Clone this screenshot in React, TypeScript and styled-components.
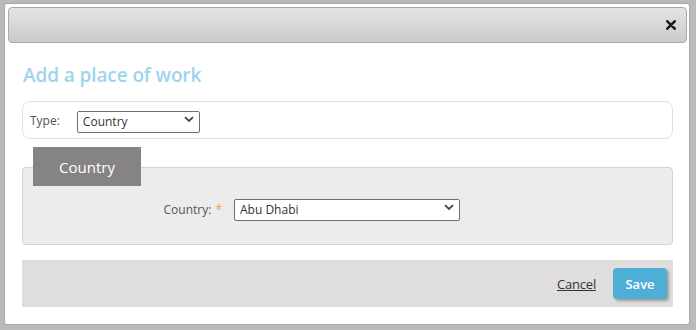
import React from "react";
import styled, { createGlobalStyle } from "styled-components";

const GlobalStyle = createGlobalStyle`
	html, body {
		margin: 0;
		padding: 0;
		background: #bababa;
		font-family: "Open Sans", "Liberation Sans", Arial, sans-serif;
	}
	#root {
		width: 696px;
		height: 330px;
		overflow: hidden;
	}
`;

const Backdrop = styled.div`
	width: 696px;
	height: 330px;
	padding: 3px 0 0 4px;
	box-sizing: border-box;
	background: #bababa;
`;

const Dialog = styled.div`
	width: 686px;
	height: 322px;
	box-sizing: border-box;
	background: #ffffff;
	border: 1px solid #a9a9a9;
	border-radius: 3px;
	padding: 3px 2px 0 3px;
	display: flex;
	flex-direction: column;
`;

const TitleBar = styled.div`
	height: 36px;
	box-sizing: border-box;
	border: 1px solid #a8a8a8;
	border-radius: 4px;
	background: linear-gradient(#e4e4e4, #cbcbcb);
	display: flex;
	align-items: center;
	justify-content: flex-end;
	padding-right: 9px;
`;

const CloseButton = styled.button`
	border: none;
	background: transparent;
	padding: 0;
	width: 12px;
	height: 12px;
	display: flex;
	align-items: center;
	justify-content: center;
	cursor: pointer;
`;

const Body = styled.div`
	padding: 0 14px 0 14px;
	display: flex;
	flex-direction: column;
`;

const Heading = styled.h2`
	margin: 20px 0 13px 1px;
	font-size: 19px;
	line-height: 25px;
	font-weight: 600;
	color: #9fd4ec;
	letter-spacing: -0.1px;
`;

const TypePanel = styled.div`
	height: 38px;
	box-sizing: border-box;
	border: 1px solid #d3e4e8;
	border-radius: 8px;
	display: flex;
	align-items: center;
	padding-left: 7px;
	gap: 17px;
`;

const Label = styled.label`
	font-size: 12px;
	color: #555555;
`;

const Required = styled.span`
	color: #f0a030;
	margin-left: 4px;
`;

const SelectWrap = styled.span<{ $width: number }>`
	position: relative;
	display: inline-block;
	width: ${(p) => p.$width}px;
	height: 22px;
`;

const Select = styled.select`
	appearance: none;
	width: 100%;
	height: 100%;
	box-sizing: border-box;
	border: 1px solid #6e6e6e;
	border-radius: 2px;
	background: #ffffff;
	font-family: inherit;
	font-size: 12px;
	color: #333333;
	padding: 0 20px 0 5px;
	outline: none;
`;

const Chevron = styled.svg`
	position: absolute;
	right: 6px;
	top: 7px;
	pointer-events: none;
`;

const Section = styled.div`
	margin-top: 8px;
	display: flex;
	flex-direction: column;
`;

const Tab = styled.div`
	align-self: flex-start;
	margin-left: 11px;
	width: 108px;
	height: 39px;
	background: #858385;
	color: #ffffff;
	font-size: 15px;
	display: flex;
	align-items: center;
	justify-content: center;
	margin-bottom: -19px;
	position: relative;
	z-index: 1;
`;

const CountryPanel = styled.div`
	height: 78px;
	box-sizing: border-box;
	background: #ececec;
	border: 1px solid #d2d2d2;
	border-radius: 4px;
	display: flex;
	align-items: flex-start;
	padding-top: 29px;
`;

const FieldLabelCol = styled.div`
	width: 199px;
	text-align: right;
	line-height: 22px;
	padding-right: 12px;
	box-sizing: content-box;
`;

const Footer = styled.div`
	margin-top: 15px;
	height: 47px;
	background: #dfdddd;
	display: flex;
	align-items: center;
	justify-content: flex-end;
	padding-right: 6px;
	gap: 17px;
`;

const CancelLink = styled.a`
	font-size: 13px;
	color: #333333;
	text-decoration: underline;
	cursor: pointer;
	margin-top: 1px;
	letter-spacing: -0.2px;
`;

const SaveButton = styled.button`
	width: 54px;
	height: 31px;
	border: none;
	border-radius: 4px;
	background: #4faed6;
	color: #ffffff;
	font-family: inherit;
	font-size: 13px;
	font-weight: 600;
	box-shadow: 2px 2px 3px rgba(0, 0, 0, 0.3);
	cursor: pointer;
`;

const ChevronIcon = () => (
	<Chevron width="10" height="7" viewBox="0 0 10 7">
		<path d="M1 1.2 L5 5 L9 1.2" fill="none" stroke="#444" strokeWidth="1.8" />
	</Chevron>
);

const App = () => {
	return (
		<>
			<GlobalStyle />
			<Backdrop>
				<Dialog>
					<TitleBar>
						<CloseButton aria-label="Close">
							<svg width="10" height="10" viewBox="0 0 10 10">
								<path d="M1.3 1.3 L8.7 8.7 M8.7 1.3 L1.3 8.7" stroke="#1a1a1a" strokeWidth="2.6" strokeLinecap="round" />
							</svg>
						</CloseButton>
					</TitleBar>
					<Body>
						<Heading>Add a place of work</Heading>
						<TypePanel>
							<Label>Type:</Label>
							<SelectWrap $width={123}>
								<Select defaultValue="Country">
									<option>Country</option>
									<option>Region</option>
									<option>City</option>
								</Select>
								<ChevronIcon />
							</SelectWrap>
						</TypePanel>
						<Section>
							<Tab>Country</Tab>
							<CountryPanel>
								<FieldLabelCol>
									<Label>
										Country:<Required>*</Required>
									</Label>
								</FieldLabelCol>
								<SelectWrap $width={226}>
									<Select defaultValue="Abu Dhabi">
										<option>Abu Dhabi</option>
									</Select>
									<ChevronIcon />
								</SelectWrap>
							</CountryPanel>
						</Section>
						<Footer>
							<CancelLink>Cancel</CancelLink>
							<SaveButton>Save</SaveButton>
						</Footer>
					</Body>
				</Dialog>
			</Backdrop>
		</>
	);
};

export default App;
